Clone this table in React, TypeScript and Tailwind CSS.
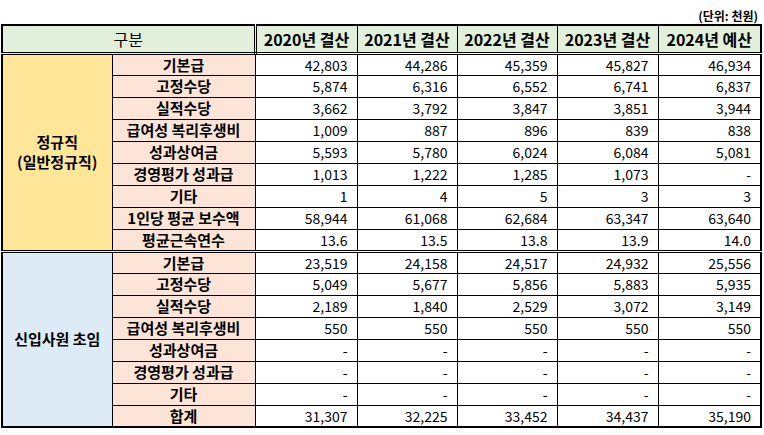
const YEARS = ["2020년 결산", "2021년 결산", "2022년 결산", "2023년 결산", "2024년 예산"];

type Row = { label: string; values: string[] };

const REGULAR: Row[] = [
  { label: "기본급", values: ["42,803", "44,286", "45,359", "45,827", "46,934"] },
  { label: "고정수당", values: ["5,874", "6,316", "6,552", "6,741", "6,837"] },
  { label: "실적수당", values: ["3,662", "3,792", "3,847", "3,851", "3,944"] },
  { label: "급여성 복리후생비", values: ["1,009", "887", "896", "839", "838"] },
  { label: "성과상여금", values: ["5,593", "5,780", "6,024", "6,084", "5,081"] },
  { label: "경영평가 성과급", values: ["1,013", "1,222", "1,285", "1,073", "-"] },
  { label: "기타", values: ["1", "4", "5", "3", "3"] },
  { label: "1인당 평균 보수액", values: ["58,944", "61,068", "62,684", "63,347", "63,640"] },
  { label: "평균근속연수", values: ["13.6", "13.5", "13.8", "13.9", "14.0"] },
];

const NEWHIRE: Row[] = [
  { label: "기본급", values: ["23,519", "24,158", "24,517", "24,932", "25,556"] },
  { label: "고정수당", values: ["5,049", "5,677", "5,856", "5,883", "5,935"] },
  { label: "실적수당", values: ["2,189", "1,840", "2,529", "3,072", "3,149"] },
  { label: "급여성 복리후생비", values: ["550", "550", "550", "550", "550"] },
  { label: "성과상여금", values: ["-", "-", "-", "-", "-"] },
  { label: "경영평가 성과급", values: ["-", "-", "-", "-", "-"] },
  { label: "기타", values: ["-", "-", "-", "-", "-"] },
  { label: "합계", values: ["31,307", "32,225", "33,452", "34,437", "35,190"] },
];

function Group({
  title,
  rows,
  fill,
  first,
}: {
  title: React.ReactNode;
  rows: Row[];
  fill: string;
  first?: boolean;
}) {
  return (
    <>
      {rows.map((row, i) => (
        <tr
          key={row.label}
          className={`h-[22px] ${i === 0 && !first ? "border-t-[3px] border-double border-black" : ""}`}
        >
          {i === 0 && (
            <td
              rowSpan={rows.length}
              className={`border border-black text-center align-middle text-[15px] font-bold leading-[20px] ${fill} ${
                !first ? "border-t-[3px] border-double" : ""
              }`}
            >
              {title}
            </td>
          )}
          <td
            className={`border border-black bg-[#fce4d6] p-0 text-center text-[15px] font-bold leading-[20px] ${
              i === 0 && !first ? "border-t-[3px] border-double" : ""
            }`}
          >
            {row.label}
          </td>
          {row.values.map((v, j) => (
            <td
              key={j}
              className={`border border-black bg-white p-0 pr-[9px] text-right text-[14px] leading-[20px] ${
                i === 0 && !first ? "border-t-[3px] border-double" : ""
              }`}
            >
              {v}
            </td>
          ))}
        </tr>
      ))}
    </>
  );
}

export default function App() {
  return (
    <div
      className="h-[435px] w-[764px] overflow-hidden bg-white text-black"
      style={{ fontFamily: '"Noto Sans CJK KR", "Noto Sans", sans-serif' }}
    >
      <div className="flex h-[24px] justify-end pr-[6px] pt-[9px] text-[12px] font-bold leading-[14px]">
        (단위: 천원)
      </div>
      <table className="ml-[1px] table-fixed border-collapse border-2 border-black">
        <colgroup>
          <col className="w-[110px]" />
          <col className="w-[143px]" />
          <col className="w-[102px]" />
          <col className="w-[100px]" />
          <col className="w-[100px]" />
          <col className="w-[101px]" />
          <col className="w-[103px]" />
        </colgroup>
        <thead>
          <tr className="h-[28px] bg-[#e2efda]">
            <th
              colSpan={2}
              className="border-2 border-b-[3px] border-r-[3px] border-black p-0 text-center text-[16px] font-normal"
              style={{ borderStyle: "solid double double solid" }}
            >
              구분
            </th>
            {YEARS.map((y) => (
              <th
                key={y}
                className="border border-t-2 border-b-[3px] border-black p-0 text-center text-[16px] font-bold"
                style={{ borderBottomStyle: "double" }}
              >
                {y}
              </th>
            ))}
          </tr>
        </thead>
        <tbody>
          <Group
            first
            title={
              <>
                정규직
                <br />
                (일반정규직)
              </>
            }
            rows={REGULAR}
            fill="bg-[#ffe699]"
          />
          <Group title="신입사원 초임" rows={NEWHIRE} fill="bg-[#ddebf7]" />
        </tbody>
      </table>
    </div>
  );
}
